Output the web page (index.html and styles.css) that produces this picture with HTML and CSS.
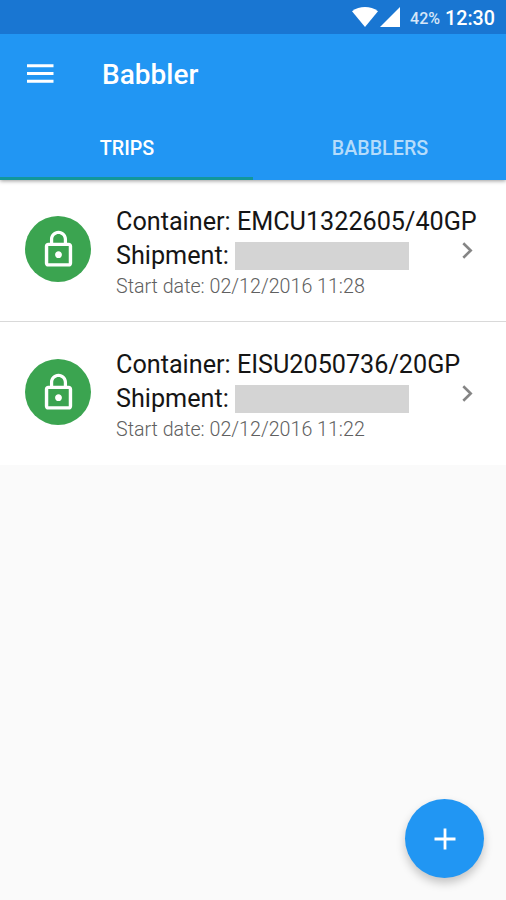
FILE: index.html
```html
<!DOCTYPE html>
<html lang="en">
<head>
<meta charset="utf-8">
<title>Babbler</title>
<link rel="stylesheet" href="styles.css">
</head>
<body>
<div class="screen">
  <header class="app-bar">
    <div class="status-bar">
      <svg class="wifi" viewBox="0 0 26 20"><path d="M0 4.200C7.500-1.400 18.500-1.400 26 4.200L13 20z"/></svg>
      <svg class="signal" viewBox="0 0 20 20"><path d="M20 0v20H0z"/></svg>
      <span class="battery">42%</span>
      <span class="clock">12:30</span>
    </div>
    <div class="toolbar">
      <svg class="menu" viewBox="0 0 27 20"><path d="M0 .3h26.500v3H0zM0 8h26.500v3H0zM0 15.800h26.500v3H0z"/></svg>
      <h1 class="title">Babbler</h1>
    </div>
    <nav class="tabs">
      <a class="tab tab-active">TRIPS</a>
      <a class="tab">BABBLERS</a>
    </nav>
  </header>
  <main class="list">
    <article class="row">
      <div class="avatar"><svg viewBox="0 0 24 24"><path d="M12 17c1.100 0 2-.9 2-2s-.9-2-2-2-2 .9-2 2 .9 2 2 2zm6-9h-1V6c0-2.760-2.240-5-5-5S7 3.240 7 6v2H6c-1.100 0-2 .9-2 2v10c0 1.100.9 2 2 2h12c1.100 0 2-.9 2-2V10c0-1.100-.9-2-2-2zM8.900 6c0-1.710 1.390-3.100 3.100-3.100s3.100 1.390 3.100 3.100v2H8.900V6zM18 20H6V10h12v10z"/></svg></div>
      <div class="details">
        <p class="line">Container: EMCU1322605/40GP</p>
        <p class="line">Shipment:<span class="redacted"></span></p>
        <p class="date">Start date: 02/12/2016 11:28</p>
      </div>
      <svg class="chevron" viewBox="0 0 11 17"><path d="M1.300 1.300L8.700 8.500 1.300 15.700"/></svg>
    </article>
    <article class="row">
      <div class="avatar"><svg viewBox="0 0 24 24"><path d="M12 17c1.100 0 2-.9 2-2s-.9-2-2-2-2 .9-2 2 .9 2 2 2zm6-9h-1V6c0-2.760-2.240-5-5-5S7 3.240 7 6v2H6c-1.100 0-2 .9-2 2v10c0 1.100.9 2 2 2h12c1.100 0 2-.9 2-2V10c0-1.100-.9-2-2-2zM8.900 6c0-1.710 1.390-3.100 3.100-3.100s3.100 1.390 3.100 3.100v2H8.900V6zM18 20H6V10h12v10z"/></svg></div>
      <div class="details">
        <p class="line">Container: EISU2050736/20GP</p>
        <p class="line">Shipment:<span class="redacted"></span></p>
        <p class="date">Start date: 02/12/2016 11:22</p>
      </div>
      <svg class="chevron" viewBox="0 0 11 17"><path d="M1.300 1.300L8.700 8.500 1.300 15.700"/></svg>
    </article>
  </main>
  <button class="fab" aria-label="Add trip"><svg viewBox="0 0 22 22"><path d="M11 .5v21M.5 11h21"/></svg></button>
</div>
</body>
</html>
```

FILE: styles.css
```css
* { box-sizing: border-box; }
body { margin: 0; font-family: Roboto, "Liberation Sans", sans-serif; }
h1, p { margin: 0; font-weight: 400; }
svg { display: block; flex: none; }

.screen { position: relative; width: 506px; height: 900px; background: #fafafa; overflow: hidden; }

.app-bar { position: relative; height: 180px; background: #2196f3; color: #fff; box-shadow: 0 1px 4px rgba(0, 0, 0, .4); }
.status-bar { height: 34px; display: flex; align-items: center; justify-content: flex-end; padding: 0 11px 0 0; background: #1976d2; }
.wifi { width: 26px; height: 20px; fill: #fff; margin-right: 2px; }
.signal { width: 20px; height: 20px; fill: #fff; margin-right: 10px; }
.battery { font-size: 16px; line-height: 34px; font-weight: 500; color: #d6e6f8; margin-right: 5px; padding-top: 3px; }
.clock { font-size: 19.700px; line-height: 34px; font-weight: 500; padding-top: 3px; }

.toolbar { height: 79px; display: flex; align-items: center; padding-left: 27px; }
.menu { width: 27px; height: 20px; fill: #fff; margin-right: 48px; }
.title { font-size: 28px; line-height: 34px; font-weight: 500; padding-top: 3px; }

.tabs { height: 67px; display: flex; }
.tab { flex: 1; display: flex; align-items: center; justify-content: center; font-size: 19.700px; font-weight: 500; color: #b5dcfb; border-bottom: 3px solid transparent; padding: 6px 0 0 1px; }
.tab-active { color: #fff; border-bottom-color: #12979a; }

.list { background: #fff; }
.row { height: 141px; display: flex; padding-left: 25px; }
.row + .row { height: 144px; padding-top: 1px; border-top: 1px solid #d9d9d9; }
.avatar { width: 66px; height: 66px; flex: none; margin: 36px 25px 0 0; border-radius: 50%; background: #3ba450; display: flex; align-items: center; justify-content: center; }
.avatar svg { width: 41px; height: 41px; fill: #fff; }
.details { width: 346px; flex: none; padding-top: 24px; white-space: nowrap; }
.line { height: 34px; display: flex; align-items: center; font-size: 25.200px; color: #151515; }
.redacted { width: 174px; height: 28px; margin: 1px 0 0 6px; background: #d4d4d4; }
.date { height: 28px; line-height: 28px; padding-top: 1px; font-size: 19.650px; font-weight: 300; color: #606060; }
.chevron { width: 11px; height: 17px; margin-top: 62px; fill: none; stroke: #858585; stroke-width: 2.600; }

.fab { position: absolute; right: 22px; bottom: 22px; width: 79px; height: 79px; padding: 0; border: 0; border-radius: 50%; background: #2196f3; display: flex; align-items: center; justify-content: center; box-shadow: 0 5px 10px rgba(0, 0, 0, .22); }
.fab svg { width: 22px; height: 22px; fill: none; stroke: #fff; stroke-width: 2.800; }
```
